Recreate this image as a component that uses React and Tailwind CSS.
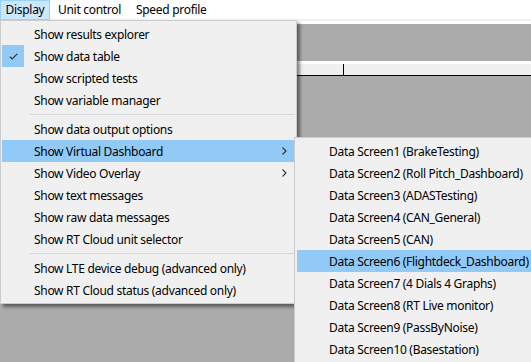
import React from "react";

const font = { fontFamily: '"Noto Sans", "Open Sans", sans-serif' };

function Chevron() {
  return (
    <svg width="5" height="8" viewBox="0 0 5 8" className="absolute right-[8px] top-[7px]">
      <path d="M0.5 0.5 L4 4 L0.5 7.5" fill="none" stroke="#333" strokeWidth="1.1" />
    </svg>
  );
}

function Item({ label, hot, checked, sub }) {
  return (
    <div className={"relative flex h-[22px] items-center mx-[1px] " + (hot ? "bg-[#91c9f7]" : "")}>
      {checked && (
        <div className="absolute left-0 top-0 flex h-[22px] w-[22px] items-center justify-center bg-[#91c9f7]">
          <svg width="9" height="7" viewBox="0 0 9 7">
            <path d="M0.8 3.6 L3.2 6 L8.2 0.8" fill="none" stroke="#333" strokeWidth="1.2" />
          </svg>
        </div>
      )}
      <span className="pl-[32px] pt-px text-[12px] leading-none tracking-[-0.3px] text-black whitespace-nowrap">{label}</span>
      {sub && <Chevron />}
    </div>
  );
}

function Sep() {
  return (
    <div className="flex h-[7px] items-center pl-[29px] pr-[1px]">
      <div className="h-px w-full bg-[#d7d7d7]" />
    </div>
  );
}

export default function App() {
  const screens = [
    "Data Screen1 (BrakeTesting)",
    "Data Screen2 (Roll Pitch_Dashboard)",
    "Data Screen3 (ADASTesting)",
    "Data Screen4 (CAN_General)",
    "Data Screen5 (CAN)",
    "Data Screen6 (Flightdeck_Dashboard)",
    "Data Screen7 (4 Dials 4 Graphs)",
    "Data Screen8 (RT Live monitor)",
    "Data Screen9 (PassByNoise)",
    "Data Screen10 (Basestation)",
  ];
  return (
    <div className="relative h-[362px] w-[531px] overflow-hidden bg-[#ababab]" style={font}>
      {/* menu bar */}
      <div className="flex h-[19px] items-stretch bg-white text-[12px] tracking-[-0.3px] text-black">
        <div className="flex h-[20px] w-[50px] items-center justify-center border border-[#99d1ff] bg-[#cce8ff]">Display</div>
        <div className="flex items-center pl-[8px] pr-[15px]">Unit control</div>
        <div className="flex items-center">Speed profile</div>
      </div>
      <div className="h-[2px] bg-[#f0f0f0]" />
      <div className="h-[3px] bg-white" />
      <div className="h-[37px] bg-[#ababab]" />
      <div className="h-[3px] bg-white" />
      <div className="flex h-[12px] bg-[#f0f0f0] border-b border-black">
        <div className="w-[344px] border-r border-black" />
      </div>

      {/* dropdown */}
      <div className="absolute left-0 top-[20px] w-[297px] border border-[#cccccc] bg-[#f0f0f0] py-[2px] shadow-[3px_3px_3px_rgba(0,0,0,0.45)]">
        <Item label="Show results explorer" />
        <Item label="Show data table" checked />
        <Item label="Show scripted tests" />
        <Item label="Show variable manager" />
        <Sep />
        <Item label="Show data output options" />
        <Item label="Show Virtual Dashboard" hot sub />
        <Item label="Show Video Overlay" sub />
        <Item label="Show text messages" />
        <Item label="Show raw data messages" />
        <Item label="Show RT Cloud unit selector" />
        <Sep />
        <Item label="Show LTE device debug (advanced only)" />
        <Item label="Show RT Cloud status (advanced only)" />
      </div>

      {/* submenu */}
      <div className="absolute left-[294px] top-[137px] w-[250px] border border-[#cccccc] bg-[#f0f0f0] py-[2px] shadow-[3px_3px_3px_rgba(0,0,0,0.45)]">
        {screens.map((s) => (
          <div key={s} className={"flex h-[22px] items-center mx-[2px] " + (s.includes("Flightdeck") ? "bg-[#91c9f7]" : "")}>
            <span className="pl-[32px] pt-px text-[12px] leading-none tracking-[-0.3px] text-black whitespace-nowrap">{s}</span>
          </div>
        ))}
      </div>
    </div>
  );
}
